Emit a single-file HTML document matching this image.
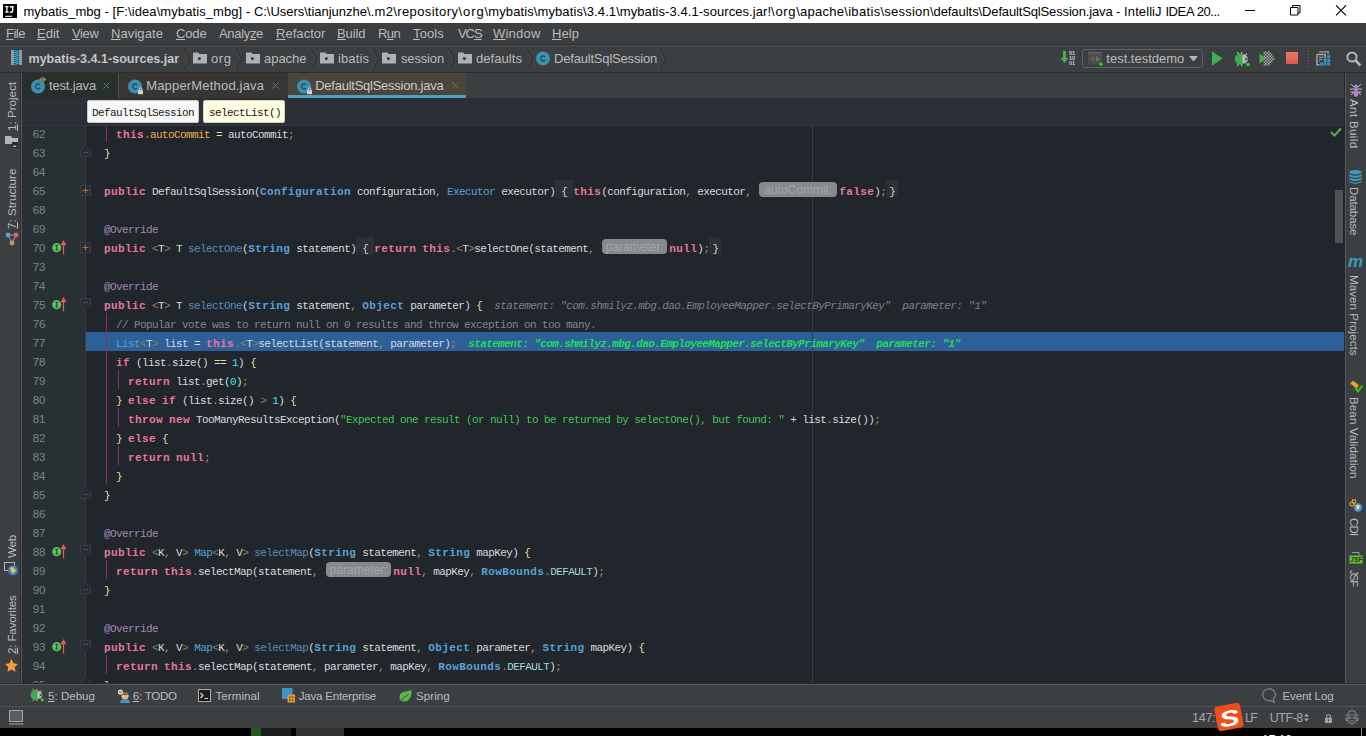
<!DOCTYPE html>
<html><head><meta charset="utf-8"><title>mybatis_mbg - IntelliJ IDEA</title>
<style>
*{box-sizing:border-box}
html,body{margin:0;padding:0}
body{width:1366px;height:736px;overflow:hidden;background:#3c3f41;position:relative;font-family:"Liberation Sans",sans-serif;font-size:12px;color:#bbbbbb}
.abs{position:absolute}
svg{position:absolute;overflow:visible}
.tx{position:absolute;white-space:pre;color:#bbbbbb}
.tx u{text-decoration:underline;text-underline-offset:0.6px;text-decoration-thickness:1px}
#title{left:0;top:0;width:1366px;height:23px;background:#ffffff}
#menu{left:0;top:23px;width:1366px;height:22px;background:#3c3f41;border-bottom:1px solid #2c2e30}
#nav{left:0;top:45px;width:1366px;height:28px;background:#3c3f41;border-top:1px solid #4b4e50;border-bottom:1px solid #2b2d2f}
#tabs{left:22px;top:73px;width:1322px;height:25px;background:#3c3f41}
#crumbs{left:22px;top:98px;width:1322px;height:28px;background:#2a3035;border-bottom:1px solid #343a40}
#editor{left:86px;top:126px;width:1258px;height:557px;background:#20262b}
#gutter{left:22px;top:126px;width:64px;height:557px;background:#293034;border-right:1px solid #373d42}
#lstrip{left:0;top:73px;width:22px;height:610px;background:#3c3f41;border-right:1px solid #555759;box-shadow:inset -1px 0 0 #2b2d2f}
#rstrip{left:1344px;top:73px;width:22px;height:610px;background:#3c3f41;border-left:1px solid #25292d;box-shadow:inset 1px 0 0 #555759}
#bbar{left:0;top:683px;width:1366px;height:23px;background:#3c3f41;border-top:1px solid #2b2d2f;box-shadow:inset 0 1px 0 #555759}
#status{left:0;top:706px;width:1366px;height:22px;background:#3c3f41;border-top:1px solid #4d5052}
#task{left:0;top:728px;width:1366px;height:8px;background:#000}
.row{position:absolute;height:19px;line-height:19px;white-space:pre;font-family:"Liberation Mono",monospace;font-size:11px;letter-spacing:-0.6px;color:#d6dade}
.ln{position:absolute;left:0;width:45.5px;text-align:right;height:19px;line-height:19px;font-family:"Liberation Sans",sans-serif;font-size:11.5px;color:#7c848a;white-space:pre}
.k{color:#e8769a;font-weight:bold;letter-spacing:0.4px}
.c{color:#5aa2d6;font-weight:bold;letter-spacing:0.4px}
.i{color:#5aa2d6}
.m{color:#5b8cba}
.f{color:#f0a94e}
.a{color:#a288b8}
.n{color:#35e4f4}
.s{color:#3fc653}
.cm{color:#80868c}
.b{color:#e8dca0}
.d{color:#a09a6c}
.o{color:#8c8658}
.sf{color:#a4d8d2}
.fb{color:#d0d4d8;background:#2a3036;padding:6.3px 0 0.3px}
.fb2{padding:6.3px 3px 0.3px}
.dbg{color:#7a8088;font-style:italic}
.dbgh{color:#22dd55;font-style:italic;font-weight:bold;letter-spacing:-0.6px}
.h{display:inline-block;vertical-align:top;margin:-1px 2px 0 2px;height:15px;line-height:17px;background:#878a8d;color:#a4a6a8;border-radius:4px;font-family:"Liberation Sans",sans-serif;font-size:12px;letter-spacing:0;text-align:center}
.vt{position:absolute;white-space:pre;font-size:12px;color:#bbbbbb;height:16px;line-height:16px;transform-origin:0 0}
</style></head><body>
<div id="title" class="abs"></div>
<svg style="left:3px;top:4px" width="14" height="14" viewBox="0 0 14 14"><rect width="14" height="14" fill="#000"/><path d="M2.200 2.700h3.400M3.900 2.700v5.400M2.200 8.100h3.400" stroke="#fff" stroke-width="1.300" fill="none"/><path d="M7 2.700h3.600M9.700 2.700v3.700q0 1.800-1.700 1.800H6.800" stroke="#fff" stroke-width="1.400" fill="none"/><path d="M2.100 12.300h6.800" stroke="#fff" stroke-width="1.100"/></svg><span class="tx" style="left:23.4px;top:3.5px;height:16px;line-height:16px;font-size:13px;letter-spacing:0.015px;color:#000;">mybatis_mbg </span><span class="tx" style="left:104.5px;top:3.5px;height:16px;line-height:16px;font-size:13px;letter-spacing:0.085px;color:#000;">- [F:\idea\mybatis_mbg] </span><span class="tx" style="left:246px;top:3.5px;height:16px;line-height:16px;font-size:13px;letter-spacing:-0.023px;color:#000;">- C:\Users\tianjunzhe</span><span class="tx" style="left:366.9px;top:3.5px;height:16px;line-height:16px;font-size:13px;letter-spacing:0.251px;color:#000;">\.m2</span><span class="tx" style="left:393.2px;top:3.5px;height:16px;line-height:16px;font-size:13px;letter-spacing:0.409px;color:#000;">\repository</span><span class="tx" style="left:458.4px;top:3.5px;height:16px;line-height:16px;font-size:13px;letter-spacing:0.948px;color:#000;">\org</span><span class="tx" style="left:484.6px;top:3.5px;height:16px;line-height:16px;font-size:13px;letter-spacing:0.099px;color:#000;">\mybatis</span><span class="tx" style="left:533.8px;top:3.5px;height:16px;line-height:16px;font-size:13px;letter-spacing:0.099px;color:#000;">\mybatis</span><span class="tx" style="left:583px;top:3.5px;height:16px;line-height:16px;font-size:13px;letter-spacing:0.111px;color:#000;">\3.4.1</span><span class="tx" style="left:616.2px;top:3.5px;height:16px;line-height:16px;font-size:13px;letter-spacing:0.064px;color:#000;">\mybatis-3.4.1-sources.jar!</span><span class="tx" style="left:771.1px;top:3.5px;height:16px;line-height:16px;font-size:13px;letter-spacing:0.673px;color:#000;">\org</span><span class="tx" style="left:796.2px;top:3.5px;height:16px;line-height:16px;font-size:13px;letter-spacing:0.248px;color:#000;">\apache</span><span class="tx" style="left:844.2px;top:3.5px;height:16px;line-height:16px;font-size:13px;letter-spacing:0.333px;color:#000;">\ibatis</span><span class="tx" style="left:880.5px;top:3.5px;height:16px;line-height:16px;font-size:13px;letter-spacing:0.212px;color:#000;">\session</span><span class="tx" style="left:929.9px;top:3.5px;height:16px;line-height:16px;font-size:13px;letter-spacing:-0.051px;color:#000;">\defaults</span><span class="tx" style="left:978.6px;top:3.5px;height:16px;line-height:16px;font-size:13px;letter-spacing:-0.147px;color:#000;">\DefaultSqlSession.java </span><span class="tx" style="left:1116px;top:3.5px;height:16px;line-height:16px;font-size:13px;letter-spacing:0.090px;color:#000;">- IntelliJ </span><span class="tx" style="left:1165.4px;top:3.5px;height:16px;line-height:16px;font-size:13px;letter-spacing:-0.390px;color:#000;">IDEA </span><span class="tx" style="left:1196.7px;top:3.5px;height:16px;line-height:16px;font-size:13px;letter-spacing:-0.439px;color:#000;">20...</span><svg style="left:1240px;top:0" width="126" height="23" viewBox="0 0 126 23"><path d="M5 10.500h10" stroke="#000" stroke-width="1" fill="none"/><path d="M50.500 7.500h7.500v7.500h-7.500zM52.500 7.500v-2h7.500v7.500h-2" stroke="#000" stroke-width="1" fill="none"/><path d="M96 5.300l10 10M106 5.300l-10 10" stroke="#000" stroke-width="1.100" fill="none"/></svg>
<div id="menu" class="abs"></div>
<span class="tx" style="left:6px;top:26.0px;height:16px;line-height:16px;font-size:13px;letter-spacing:-0.488px;"><u>F</u>ile</span><span class="tx" style="left:37px;top:26.0px;height:16px;line-height:16px;font-size:13px;letter-spacing:0.023px;"><u>E</u>dit</span><span class="tx" style="left:72px;top:26.0px;height:16px;line-height:16px;font-size:13px;letter-spacing:-0.363px;"><u>V</u>iew</span><span class="tx" style="left:111px;top:26.0px;height:16px;line-height:16px;font-size:13px;letter-spacing:0.086px;"><u>N</u>avigate</span><span class="tx" style="left:176px;top:26.0px;height:16px;line-height:16px;font-size:13px;letter-spacing:-0.145px;"><u>C</u>ode</span><span class="tx" style="left:219px;top:26.0px;height:16px;line-height:16px;font-size:13px;letter-spacing:-0.321px;">Analy<u>z</u>e</span><span class="tx" style="left:276px;top:26.0px;height:16px;line-height:16px;font-size:13px;letter-spacing:0.045px;"><u>R</u>efactor</span><span class="tx" style="left:337px;top:26.0px;height:16px;line-height:16px;font-size:13px;letter-spacing:-0.084px;"><u>B</u>uild</span><span class="tx" style="left:378px;top:26.0px;height:16px;line-height:16px;font-size:13px;letter-spacing:-0.620px;">R<u>u</u>n</span><span class="tx" style="left:413px;top:26.0px;height:16px;line-height:16px;font-size:13px;letter-spacing:0.128px;"><u>T</u>ools</span><span class="tx" style="left:458px;top:26.0px;height:16px;line-height:16px;font-size:13px;letter-spacing:-1.078px;">VC<u>S</u></span><span class="tx" style="left:493px;top:26.0px;height:16px;line-height:16px;font-size:13px;letter-spacing:0.208px;"><u>W</u>indow</span><span class="tx" style="left:552px;top:26.0px;height:16px;line-height:16px;font-size:13px;letter-spacing:0.062px;"><u>H</u>elp</span>
<div id="nav" class="abs"></div>
<svg style="left:11px;top:50px" width="11" height="15" viewBox="0 0 11 15"><rect x="0" y="0" width="11" height="15" fill="#8d98a1"/><rect x="3" y="0" width="5" height="15" fill="#2f3a42"/><path d="M3.300 0.500l4.400 1-4.400 1 4.400 1-4.400 1 4.400 1-4.400 1 4.400 1-4.400 1 4.400 1-4.400 1 4.400 1-4.400 1 4.400 1-4.400 1" stroke="#2cb4e6" stroke-width="0.900" fill="none"/></svg><span class="tx" style="left:28.5px;top:51.0px;height:16px;line-height:16px;font-size:12.5px;letter-spacing:0.025px;font-weight:bold;color:#c4c6c8;">mybatis-3.4.1-sources.jar</span><svg style="left:181.6px;top:47.500px" width="8" height="22" viewBox="0 0 8 22"><path d="M0.500 0.200l6 10.800-6 10.800" stroke="#505355" stroke-width="1" fill="none"/><path d="M1.500 0.200l6 10.800-6 10.800" stroke="#2b2d2f" stroke-width="1.100" fill="none"/></svg><svg style="left:193px;top:52px" width="14" height="12" viewBox="0 0 14 12"><path d="M0 0.5h5.2l1.3 1.6H14V11.5H0z" fill="#aab2ba"/><circle cx="6.4" cy="6.6" r="1.6" fill="#3c3f41"/></svg><span class="tx" style="left:211px;top:51.0px;height:16px;line-height:16px;font-size:13px;letter-spacing:0.568px;">org</span><svg style="left:246px;top:52px" width="14" height="12" viewBox="0 0 14 12"><path d="M0 0.5h5.2l1.3 1.6H14V11.5H0z" fill="#aab2ba"/><circle cx="6.4" cy="6.6" r="1.6" fill="#3c3f41"/></svg><span class="tx" style="left:264px;top:51.0px;height:16px;line-height:16px;font-size:13px;letter-spacing:-0.026px;">apache</span><svg style="left:320px;top:52px" width="14" height="12" viewBox="0 0 14 12"><path d="M0 0.5h5.2l1.3 1.6H14V11.5H0z" fill="#aab2ba"/><circle cx="6.4" cy="6.6" r="1.6" fill="#3c3f41"/></svg><span class="tx" style="left:338px;top:51.0px;height:16px;line-height:16px;font-size:13px;letter-spacing:0.107px;">ibatis</span><svg style="left:382px;top:52px" width="14" height="12" viewBox="0 0 14 12"><path d="M0 0.5h5.2l1.3 1.6H14V11.5H0z" fill="#aab2ba"/><circle cx="6.4" cy="6.6" r="1.6" fill="#3c3f41"/></svg><span class="tx" style="left:401px;top:51.0px;height:16px;line-height:16px;font-size:13px;letter-spacing:-0.154px;">session</span><svg style="left:458px;top:52px" width="14" height="12" viewBox="0 0 14 12"><path d="M0 0.5h5.2l1.3 1.6H14V11.5H0z" fill="#aab2ba"/><circle cx="6.4" cy="6.6" r="1.6" fill="#3c3f41"/></svg><span class="tx" style="left:476px;top:51.0px;height:16px;line-height:16px;font-size:13px;letter-spacing:0.057px;">defaults</span><svg style="left:234px;top:47.500px" width="8" height="22" viewBox="0 0 8 22"><path d="M0.500 0.200l6 10.800-6 10.800" stroke="#505355" stroke-width="1" fill="none"/><path d="M1.500 0.200l6 10.800-6 10.800" stroke="#2b2d2f" stroke-width="1.100" fill="none"/></svg><svg style="left:308.5px;top:47.500px" width="8" height="22" viewBox="0 0 8 22"><path d="M0.500 0.200l6 10.800-6 10.800" stroke="#505355" stroke-width="1" fill="none"/><path d="M1.500 0.200l6 10.800-6 10.800" stroke="#2b2d2f" stroke-width="1.100" fill="none"/></svg><svg style="left:371.2px;top:47.500px" width="8" height="22" viewBox="0 0 8 22"><path d="M0.500 0.200l6 10.800-6 10.800" stroke="#505355" stroke-width="1" fill="none"/><path d="M1.500 0.200l6 10.800-6 10.800" stroke="#2b2d2f" stroke-width="1.100" fill="none"/></svg><svg style="left:446.6px;top:47.500px" width="8" height="22" viewBox="0 0 8 22"><path d="M0.500 0.200l6 10.800-6 10.800" stroke="#505355" stroke-width="1" fill="none"/><path d="M1.500 0.200l6 10.800-6 10.800" stroke="#2b2d2f" stroke-width="1.100" fill="none"/></svg><svg style="left:524.6px;top:47.500px" width="8" height="22" viewBox="0 0 8 22"><path d="M0.500 0.200l6 10.800-6 10.800" stroke="#505355" stroke-width="1" fill="none"/><path d="M1.500 0.200l6 10.800-6 10.800" stroke="#2b2d2f" stroke-width="1.100" fill="none"/></svg><svg style="left:536px;top:51px" width="16" height="16" viewBox="0 0 16 16"><circle cx="7" cy="7.500" r="7" fill="#3b8fb0"/><path d="M9.100 6a2.500 2.500 0 1 0 0 3" stroke="#234e62" stroke-width="1.300" fill="none"/></svg><span class="tx" style="left:554px;top:51.0px;height:16px;line-height:16px;font-size:13px;letter-spacing:-0.190px;">DefaultSqlSession</span><svg style="left:658.2px;top:47.500px" width="8" height="22" viewBox="0 0 8 22"><path d="M0.500 0.200l6 10.800-6 10.800" stroke="#505355" stroke-width="1" fill="none"/><path d="M1.500 0.200l6 10.800-6 10.800" stroke="#2b2d2f" stroke-width="1.100" fill="none"/></svg><svg style="left:1060px;top:50px" width="17" height="16" viewBox="0 0 17 16"><path d="M3 1h3v7h2.5L4.5 13 0.5 8H3z" fill="#4faa4f"/><g fill="#c8cacc" font-family="Liberation Sans,sans-serif" font-size="5.5" font-weight="bold"><text x="9" y="5">01</text><text x="9" y="10">10</text><text x="9" y="15">01</text></g></svg><div class="abs" style="left:1082px;top:49px;width:121px;height:19px;border:1px solid #5e6163;border-radius:3px;background:#3c3f41"></div><svg style="left:1088px;top:52px" width="16" height="15" viewBox="0 0 16 15"><rect x="0" y="0" width="14" height="12.500" fill="#4b4e50"/><rect x="0" y="0" width="14" height="1.600" fill="#5c5f61"/><path d="M6 3.800v6.400L2 7z" fill="#84504a"/><path d="M8 3.800v6.400L12 7z" fill="#4a8456"/><circle cx="13" cy="12.200" r="2.100" fill="#1fe01f" stroke="#2c2e30" stroke-width="0.500"/></svg><span class="tx" style="left:1106.3px;top:51.0px;height:16px;line-height:16px;font-size:13px;letter-spacing:-0.004px;">test.testdemo</span><svg style="left:1189px;top:55.700px" width="9" height="5.400" viewBox="0 0 9 5.400"><path d="M0 0h9L4.500 5.400z" fill="#b4b6b8"/></svg><svg style="left:1212px;top:50.500px" width="11" height="15" viewBox="0 0 11 15"><path d="M0 0.300L10.600 7.500 0 14.700z" fill="#45ad4d"/></svg><svg style="left:1234px;top:51px" width="18" height="16" viewBox="0 0 18 16"><path d="M3 1l2.500 3M8 1l-1 3M3 15l2.500-3M8 15l-1-3M13 2.500l-2.500 2.500M13 13l-2.500-2.500" stroke="#b8babc" stroke-width="1.100" fill="none"/><ellipse cx="6.300" cy="8" rx="5.600" ry="5.600" fill="#3fae4a"/><path d="M9 3.200q5 1 5 4.800t-5 4.800q-2-4.800 0-9.600z" fill="#b4b6b8"/><path d="M11.500 6.500l2.800 1.500-2.800 1.500z" fill="#3c3f41"/><circle cx="14" cy="13.600" r="2.200" fill="#1fe01f" stroke="#2c2e30" stroke-width="0.600"/></svg><svg style="left:1259px;top:51px" width="17" height="15" viewBox="0 0 17 15"><defs><pattern id="ck" width="3" height="3" patternUnits="userSpaceOnUse"><rect width="1.5" height="1.5" fill="#b0b2b4"/><rect x="1.5" y="1.5" width="1.5" height="1.5" fill="#b0b2b4"/></pattern></defs><path d="M4.500 0.300h6l5.500 7.200-5.500 7.200h-6z" fill="url(#ck)"/><path d="M0.5 2.5L7 7.5 0.5 12.5z" fill="#4cb04c"/></svg><div class="abs" style="left:1286px;top:52px;width:12px;height:12px;background:linear-gradient(#e8786a,#dc5c4c)"></div><div class="abs" style="left:1308px;top:48px;width:1px;height:20px;background:repeating-linear-gradient(#6a6d6f 0 1px,transparent 1px 3px)"></div><svg style="left:1316px;top:51px" width="15" height="15" viewBox="0 0 15 15"><path d="M3 0.800h9.200v2.800" fill="none" stroke="#9a9da0" stroke-width="1.300"/><g fill="#3592c4"><rect x="11.200" y="4.300" width="3" height="3"/><rect x="7.600" y="7.900" width="3" height="3"/><rect x="11.200" y="7.900" width="3" height="3"/><rect x="4" y="11.500" width="3" height="3"/><rect x="7.600" y="11.500" width="3" height="3"/><rect x="11.200" y="11.500" width="3" height="3"/></g><path d="M0.900 3.400h8.300v4M0.900 3.400v10.300h2.600" fill="none" stroke="#a4a7aa" stroke-width="1.500"/><path d="M3 6.200h4.500M3 8.400h3M3 10.500h1" stroke="#a4a7aa" stroke-width="1"/></svg><svg style="left:1346px;top:51px" width="16" height="16" viewBox="0 0 16 16"><circle cx="6" cy="6" r="4.6" fill="none" stroke="#b0b2b4" stroke-width="2"/><path d="M9.5 9.5L14.5 14.5" stroke="#b0b2b4" stroke-width="2.6"/></svg>
<div id="lstrip" class="abs"></div>
<div id="rstrip" class="abs"></div>
<span class="vt" style="left:3.8px;top:130.6px;transform:rotate(-90deg);font-size:11.6px;letter-spacing:0.002px"><u>1</u>: Project</span><svg style="left:5px;top:136px" width="13" height="12" viewBox="0 0 13 12"><path d="M0 0h6l1.2 2H13v6H0z" fill="#aeb4ba"/><rect x="7" y="6" width="6" height="6" fill="#2b2b2b"/><rect x="8.2" y="9.6" width="3.2" height="1.2" fill="#ddd"/></svg><span class="vt" style="left:3.8px;top:228.5px;transform:rotate(-90deg);font-size:11.6px;letter-spacing:0.047px"><u>7</u>: Structure</span><svg style="left:5px;top:232px" width="14" height="14" viewBox="0 0 14 14"><path d="M3 3l4 8M11 3l-4 8M3 3h8" stroke="#9a9da0" stroke-width="1" fill="none"/><circle cx="3" cy="3" r="2.4" fill="#5aa0d8"/><circle cx="11" cy="3" r="2.4" fill="#e06060"/><circle cx="7" cy="11" r="2.4" fill="#d89050"/></svg><span class="vt" style="left:3.8px;top:558.0px;transform:rotate(-90deg);font-size:11.6px;letter-spacing:-0.214px">Web</span><svg style="left:4px;top:562px" width="15" height="14" viewBox="0 0 15 14"><rect x="0.5" y="0.5" width="10" height="8" fill="none" stroke="#aeb4ba"/><circle cx="9" cy="8.5" r="5" fill="#3a7fd0"/><path d="M6 6q2-2 4 0t2 3q-2 1-3 3-2-2-3-6z" fill="#e8c848"/></svg><span class="vt" style="left:3.8px;top:654.4px;transform:rotate(-90deg);font-size:11.6px;letter-spacing:-0.157px"><u>2</u>: Favorites</span><svg style="left:5px;top:659px" width="13" height="13" viewBox="0 0 13 13"><path d="M6.5 0l2 4.3 4.5.6-3.3 3.2.8 4.7-4-2.3-4 2.3.8-4.7L0 4.900l4.500-.6z" fill="#f0a035"/></svg>
<svg style="left:1350px;top:83px" width="12" height="14" viewBox="0 0 12 14"><path d="M1 1l3 3M11 1l-3 3M0 6h12M1 12l3-3M11 12l-3-3M0.500 9h11" stroke="#c8cacc" stroke-width="0.9" fill="none"/><ellipse cx="6" cy="3.500" rx="2" ry="2" fill="#b77fd8"/><ellipse cx="6" cy="7" rx="1.800" ry="1.800" fill="#b77fd8"/><ellipse cx="6" cy="11" rx="2.400" ry="2.800" fill="#b77fd8"/></svg><span class="vt" style="left:1361.7px;top:99.3px;transform:rotate(90deg);font-size:11.6px;letter-spacing:0.344px">Ant Build</span><svg style="left:1349px;top:170px" width="13" height="14" viewBox="0 0 13 14"><g fill="#3d9ac8"><ellipse cx="6.500" cy="2.200" rx="6.300" ry="2.200"/><path d="M0.200 4.200q6.300 3 12.600 0v2q-6.300 3-12.600 0z"/><path d="M0.200 7.600q6.300 3 12.600 0v2q-6.300 3-12.600 0z"/><path d="M0.200 11q6.300 3 12.600 0v1q-6.300 3.500-12.600 0z"/></g></svg><span class="vt" style="left:1361.7px;top:187.4px;transform:rotate(90deg);font-size:11.6px;letter-spacing:-0.155px">Database</span><div class="abs" style="left:1348px;top:252px;width:16px;height:20px;line-height:20px;font:italic bold 17px 'Liberation Sans',sans-serif;color:#3d9ac8">m</div><span class="vt" style="left:1361.7px;top:274.8px;transform:rotate(90deg);font-size:11.6px;letter-spacing:0.057px">Maven Projects</span><svg style="left:1349px;top:380px" width="14" height="13" viewBox="0 0 14 13"><path d="M1 3.500L4 0.500l6 4.500-2 4z" fill="#e8a030" stroke="#8a5a10" stroke-width="0.800"/><path d="M6.500 8.500l2.500 3 4.500-6" stroke="#22cc22" stroke-width="2" fill="none"/></svg><span class="vt" style="left:1361.7px;top:397.0px;transform:rotate(90deg);font-size:11.6px;letter-spacing:0.083px">Bean Validation</span><svg style="left:1349px;top:499px" width="14" height="14" viewBox="0 0 14 14"><circle cx="3" cy="5" r="2" fill="none" stroke="#e8a030" stroke-width="1.200"/><circle cx="5" cy="2.500" r="1.800" fill="none" stroke="#e8a030" stroke-width="1.200"/><circle cx="9" cy="8.500" r="4.200" fill="#4a90d8"/><path d="M7 6.500q2-1.500 4 0.500-0.500 3-3 4z" fill="#f0e060"/></svg><span class="vt" style="left:1361.7px;top:517.5px;transform:rotate(90deg);font-size:11.6px;letter-spacing:-0.856px">CDI</span><svg style="left:1349px;top:552px" width="14" height="14" viewBox="0 0 14 14"><path d="M3 0.500h7v3" stroke="#9a9da0" fill="none"/><rect x="0.500" y="3.500" width="13" height="8" fill="#62c040"/><text x="1.300" y="10.300" font-family="Liberation Sans,sans-serif" font-size="6.500" font-weight="bold" fill="#1a3a10">JSF</text></svg><span class="vt" style="left:1361.7px;top:569.8px;transform:rotate(90deg);font-size:10.5px;letter-spacing:-0.891px">JSF</span>
<div id="tabs" class="abs"></div>
<div class="abs" style="left:22px;top:73px;width:96px;height:25px;background:#262f2a"></div><div class="abs" style="left:118px;top:73px;width:170px;height:25px;background:#383634;border-left:1px solid #4c4b49"></div><div class="abs" style="left:288px;top:73px;width:178px;height:25px;background:#4a4539;border-bottom:3px solid #4a9fc8"></div><svg style="left:31px;top:78.5px" width="16" height="16" viewBox="0 0 16 16"><circle cx="7" cy="7.500" r="7" fill="#3b8fb0"/><path d="M9.100 6a2.500 2.500 0 1 0 0 3" stroke="#234e62" stroke-width="1.300" fill="none"/></svg><svg style="left:39px;top:76px" width="8" height="8" viewBox="0 0 8 8"><path d="M0 3.500L3 1v5z" fill="#e05a3a"/><path d="M3.500 0.500L7.500 3.500 3.500 6.500z" fill="#4cb04c"/></svg><span class="tx" style="left:49px;top:78.3px;height:16px;line-height:16px;font-size:13px;letter-spacing:-0.158px;">test.java</span><svg style="left:102.5px;top:82px" width="7" height="7" viewBox="0 0 8 8"><path d="M0.500 0.500l7 7M7.500 0.500l-7 7" stroke="#6e7174" stroke-width="1.100" fill="none"/></svg><svg style="left:128px;top:78.5px" width="16" height="16" viewBox="0 0 16 16"><circle cx="7" cy="7.500" r="7" fill="#3b8fb0"/><path d="M9.100 6a2.500 2.500 0 1 0 0 3" stroke="#234e62" stroke-width="1.300" fill="none"/><rect x="10" y="11.200" width="5" height="4" fill="#d0d2d4"/><path d="M11.200 11.200V10a1.300 1.300 0 0 1 2.600 0v1.200" stroke="#d0d2d4" stroke-width="1" fill="none"/></svg><span class="tx" style="left:146.2px;top:78.3px;height:16px;line-height:16px;font-size:13px;letter-spacing:0.182px;">MapperMethod.java</span><svg style="left:272px;top:82px" width="7" height="7" viewBox="0 0 8 8"><path d="M0.500 0.500l7 7M7.500 0.500l-7 7" stroke="#6e7174" stroke-width="1.100" fill="none"/></svg><svg style="left:297px;top:78.5px" width="16" height="16" viewBox="0 0 16 16"><circle cx="7" cy="7.500" r="7" fill="#3b8fb0"/><path d="M9.100 6a2.500 2.500 0 1 0 0 3" stroke="#234e62" stroke-width="1.300" fill="none"/><rect x="10" y="11.200" width="5" height="4" fill="#d0d2d4"/><path d="M11.200 11.200V10a1.300 1.300 0 0 1 2.600 0v1.200" stroke="#d0d2d4" stroke-width="1" fill="none"/></svg><span class="tx" style="left:315.2px;top:78.3px;height:16px;line-height:16px;font-size:13px;letter-spacing:-0.250px;color:#c8cacc;">DefaultSqlSession.java</span><svg style="left:451.5px;top:82px" width="7" height="7" viewBox="0 0 8 8"><path d="M0.500 0.500l7 7M7.500 0.500l-7 7" stroke="#6e7174" stroke-width="1.100" fill="none"/></svg>
<div id="crumbs" class="abs"></div>
<div class="abs" style="left:87px;top:100px;width:112px;height:22.6px;background:#f7f7f7;border:1px solid #c9c9c9;border-radius:2px"></div><div class="abs" style="left:203px;top:100px;width:82px;height:22.6px;background:#fffde3;border:1px solid #d8d6b8;border-radius:2px"></div><div class="row" style="left:92px;top:103.500px;color:#1a1a1a">DefaultSqlSession</div><div class="row" style="left:209px;top:103.500px;color:#1a1a1a">selectList()</div>
<div id="editor" class="abs"></div><div id="gutter" class="abs"></div>
<div class="abs" style="left:86px;top:332px;width:1258px;height:19px;background:#2d5f98"></div>
<div class="abs" style="left:812px;top:126px;width:1px;height:557px;background:#343a40"></div>
<div class="abs" style="left:106px;top:126px;width:1px;height:16px;background:#8e3055"></div><div class="abs" style="left:106px;top:313px;width:1px;height:171px;background:#8e3055"></div><div class="abs" style="left:118px;top:370px;width:1px;height:19px;background:#8e3055"></div><div class="abs" style="left:118px;top:408px;width:1px;height:19px;background:#8e3055"></div><div class="abs" style="left:118px;top:446px;width:1px;height:19px;background:#8e3055"></div><div class="abs" style="left:106px;top:560px;width:1px;height:19px;background:#8e3055"></div><div class="abs" style="left:106px;top:655px;width:1px;height:19px;background:#8e3055"></div>
<svg style="left:52px;top:240px" width="14" height="15" viewBox="0 0 14 15"><circle cx="4.700" cy="7.700" r="4.600" fill="#5dbb63"/><path d="M3.400 5.400h2.600M4.700 5.400v4.600M3.400 10h2.600" stroke="#1f3a22" stroke-width="0.900" fill="none"/><path d="M11.500 14.500V2M9.600 4.600l1.900-3.400 1.900 3.400z" stroke="#e0604a" stroke-width="1.200" fill="#e0604a"/></svg><svg style="left:52px;top:297px" width="14" height="15" viewBox="0 0 14 15"><circle cx="4.700" cy="7.700" r="4.600" fill="#5dbb63"/><path d="M3.400 5.400h2.600M4.700 5.400v4.600M3.400 10h2.600" stroke="#1f3a22" stroke-width="0.900" fill="none"/><path d="M11.500 14.500V2M9.600 4.600l1.900-3.400 1.900 3.400z" stroke="#e0604a" stroke-width="1.200" fill="#e0604a"/></svg><svg style="left:52px;top:544px" width="14" height="15" viewBox="0 0 14 15"><circle cx="4.700" cy="7.700" r="4.600" fill="#5dbb63"/><path d="M3.400 5.400h2.600M4.700 5.400v4.600M3.400 10h2.600" stroke="#1f3a22" stroke-width="0.900" fill="none"/><path d="M11.500 14.500V2M9.600 4.600l1.900-3.400 1.900 3.400z" stroke="#e0604a" stroke-width="1.200" fill="#e0604a"/></svg><svg style="left:52px;top:639px" width="14" height="15" viewBox="0 0 14 15"><circle cx="4.700" cy="7.700" r="4.600" fill="#5dbb63"/><path d="M3.400 5.400h2.600M4.700 5.400v4.600M3.400 10h2.600" stroke="#1f3a22" stroke-width="0.900" fill="none"/><path d="M11.500 14.500V2M9.600 4.600l1.900-3.400 1.900 3.400z" stroke="#e0604a" stroke-width="1.200" fill="#e0604a"/></svg><svg style="left:80px;top:145px" width="11" height="12" viewBox="0 0 11 12"><path d="M0.500 11.500h10V5L5.500 0.500 0.500 5z" fill="#262c31" stroke="#363d43"/><path d="M3 7.500h5" stroke="#464e55" stroke-width="1"/></svg><svg style="left:80px;top:185px" width="11" height="11" viewBox="0 0 11 11"><rect x="0.500" y="0.500" width="10" height="10" fill="#262c31" stroke="#363d43"/><path d="M2.500 5.500h6M5.500 2.500v6" stroke="#b56c1c" stroke-width="1.100"/></svg><svg style="left:80px;top:242px" width="11" height="11" viewBox="0 0 11 11"><rect x="0.500" y="0.500" width="10" height="10" fill="#262c31" stroke="#363d43"/><path d="M2.500 5.500h6M5.500 2.500v6" stroke="#b56c1c" stroke-width="1.100"/></svg><svg style="left:80px;top:298px" width="11" height="12" viewBox="0 0 11 12"><path d="M0.500 0.500h10v6.500l-5 4.500-5-4.500z" fill="#262c31" stroke="#363d43"/><path d="M3 4.500h5" stroke="#464e55" stroke-width="1"/></svg><svg style="left:80px;top:487px" width="11" height="12" viewBox="0 0 11 12"><path d="M0.500 11.500h10V5L5.500 0.500 0.500 5z" fill="#262c31" stroke="#363d43"/><path d="M3 7.500h5" stroke="#464e55" stroke-width="1"/></svg><svg style="left:80px;top:545px" width="11" height="12" viewBox="0 0 11 12"><path d="M0.500 0.500h10v6.500l-5 4.500-5-4.500z" fill="#262c31" stroke="#363d43"/><path d="M3 4.500h5" stroke="#464e55" stroke-width="1"/></svg><svg style="left:80px;top:582px" width="11" height="12" viewBox="0 0 11 12"><path d="M0.500 11.500h10V5L5.500 0.500 0.500 5z" fill="#262c31" stroke="#363d43"/><path d="M3 7.500h5" stroke="#464e55" stroke-width="1"/></svg><svg style="left:80px;top:640px" width="11" height="12" viewBox="0 0 11 12"><path d="M0.500 0.500h10v6.500l-5 4.500-5-4.500z" fill="#262c31" stroke="#363d43"/><path d="M3 4.500h5" stroke="#464e55" stroke-width="1"/></svg><svg style="left:80px;top:677px" width="11" height="12" viewBox="0 0 11 12"><path d="M0.500 11.500h10V5L5.500 0.500 0.500 5z" fill="#262c31" stroke="#363d43"/><path d="M3 7.500h5" stroke="#464e55" stroke-width="1"/></svg>
<div class="ln" style="top:125px">62</div><div class="row" style="top:126px;left:116px"><span class="k">this</span><span class="d">.</span><span class="f">autoCommit</span> <span class="b">=</span> autoCommit<span class="d">;</span></div>
<div class="ln" style="top:144px">63</div><div class="row" style="top:145px;left:104px"><span class="b">}</span></div>
<div class="ln" style="top:163px">64</div>
<div class="ln" style="top:182px">65</div><div class="row" style="top:183px;left:104px"><span class="k">public</span> DefaultSqlSession(<span class="c">Configuration</span> configuration<span class="d">,</span> <span class="i">Executor</span> executor)<span class="fb"> { </span><span class="k">this</span>(configuration<span class="d">,</span> executor<span class="d">,</span> <span class="h" style="width:78px">autoCommit:</span><span class="k">false</span>)<span class="d">;</span><span class="fb fb2">}</span></div>
<div class="ln" style="top:201px">68</div>
<div class="ln" style="top:220px">69</div><div class="row" style="top:221px;left:104px"><span class="a">@Override</span></div>
<div class="ln" style="top:239px">70</div><div class="row" style="top:240px;left:104px"><span class="k">public</span> <span class="o">&lt;</span>T<span class="o">&gt;</span> T <span class="m">selectOne</span>(<span class="c">String</span> statement)<span class="fb"> { </span><span class="k">return</span> <span class="k">this</span><span class="d">.</span><span class="o">&lt;</span>T<span class="o">&gt;</span>selectOne(statement<span class="d">,</span> <span class="h" style="width:65px">parameter:</span><span class="k">null</span>)<span class="d">;</span><span class="fb fb2">}</span></div>
<div class="ln" style="top:258px">73</div>
<div class="ln" style="top:277px">74</div><div class="row" style="top:278px;left:104px"><span class="a">@Override</span></div>
<div class="ln" style="top:296px">75</div><div class="row" style="top:297px;left:104px"><span class="k">public</span> <span class="o">&lt;</span>T<span class="o">&gt;</span> T <span class="m">selectOne</span>(<span class="c">String</span> statement<span class="d">,</span> <span class="c">Object</span> parameter) <span class="b">{</span>  <span class="dbg">statement: &quot;com.shmilyz.mbg.dao.EmployeeMapper.selectByPrimaryKey&quot;  parameter: &quot;1&quot;</span></div>
<div class="ln" style="top:315px">76</div><div class="row" style="top:316px;left:116px"><span class="cm">// Popular vote was to return null on 0 results and throw exception on too many.</span></div>
<div class="ln" style="top:334px">77</div><div class="row" style="top:335px;left:116px"><span class="i">List</span><span class="o">&lt;</span>T<span class="o">&gt;</span> list <span class="b">=</span> <span class="k">this</span><span class="d">.</span><span class="o">&lt;</span>T<span class="o">&gt;</span>selectList(statement<span class="d">,</span> parameter)<span class="d">;</span>  <span class="dbgh">statement: &quot;com.shmilyz.mbg.dao.EmployeeMapper.selectByPrimaryKey&quot;  parameter: &quot;1&quot;</span></div>
<div class="ln" style="top:353px">78</div><div class="row" style="top:354px;left:116px"><span class="k">if</span> (list<span class="d">.</span>size() <span class="b">==</span> <span class="n">1</span>) <span class="b">{</span></div>
<div class="ln" style="top:372px">79</div><div class="row" style="top:373px;left:128px"><span class="k">return</span> list<span class="d">.</span>get(<span class="n">0</span>)<span class="d">;</span></div>
<div class="ln" style="top:391px">80</div><div class="row" style="top:392px;left:116px"><span class="b">}</span> <span class="k">else</span> <span class="k">if</span> (list<span class="d">.</span>size() <span class="o">&gt;</span> <span class="n">1</span>) <span class="b">{</span></div>
<div class="ln" style="top:410px">81</div><div class="row" style="top:411px;left:128px"><span class="k">throw</span> <span class="k">new</span> TooManyResultsException(<span class="s">&quot;Expected one result (or null) to be returned by selectOne(), but found: &quot;</span> + list<span class="d">.</span>size())<span class="d">;</span></div>
<div class="ln" style="top:429px">82</div><div class="row" style="top:430px;left:116px"><span class="b">}</span> <span class="k">else</span> <span class="b">{</span></div>
<div class="ln" style="top:448px">83</div><div class="row" style="top:449px;left:128px"><span class="k">return</span> <span class="k">null</span><span class="d">;</span></div>
<div class="ln" style="top:467px">84</div><div class="row" style="top:468px;left:116px"><span class="b">}</span></div>
<div class="ln" style="top:486px">85</div><div class="row" style="top:487px;left:104px"><span class="b">}</span></div>
<div class="ln" style="top:505px">86</div>
<div class="ln" style="top:524px">87</div><div class="row" style="top:525px;left:104px"><span class="a">@Override</span></div>
<div class="ln" style="top:543px">88</div><div class="row" style="top:544px;left:104px"><span class="k">public</span> <span class="o">&lt;</span>K<span class="d">,</span> V<span class="o">&gt;</span> <span class="i">Map</span><span class="o">&lt;</span>K<span class="d">,</span> V<span class="o">&gt;</span> <span class="m">selectMap</span>(<span class="c">String</span> statement<span class="d">,</span> <span class="c">String</span> mapKey) <span class="b">{</span></div>
<div class="ln" style="top:562px">89</div><div class="row" style="top:563px;left:116px"><span class="k">return</span> <span class="k">this</span><span class="d">.</span>selectMap(statement<span class="d">,</span> <span class="h" style="width:65px">parameter:</span><span class="k">null</span><span class="d">,</span> mapKey<span class="d">,</span> <span class="c">RowBounds</span><span class="d">.</span><span class="sf">DEFAULT</span>)<span class="d">;</span></div>
<div class="ln" style="top:581px">90</div><div class="row" style="top:582px;left:104px"><span class="b">}</span></div>
<div class="ln" style="top:600px">91</div>
<div class="ln" style="top:619px">92</div><div class="row" style="top:620px;left:104px"><span class="a">@Override</span></div>
<div class="ln" style="top:638px">93</div><div class="row" style="top:639px;left:104px"><span class="k">public</span> <span class="o">&lt;</span>K<span class="d">,</span> V<span class="o">&gt;</span> <span class="i">Map</span><span class="o">&lt;</span>K<span class="d">,</span> V<span class="o">&gt;</span> <span class="m">selectMap</span>(<span class="c">String</span> statement<span class="d">,</span> <span class="c">Object</span> parameter<span class="d">,</span> <span class="c">String</span> mapKey) <span class="b">{</span></div>
<div class="ln" style="top:657px">94</div><div class="row" style="top:658px;left:116px"><span class="k">return</span> <span class="k">this</span><span class="d">.</span>selectMap(statement<span class="d">,</span> parameter<span class="d">,</span> mapKey<span class="d">,</span> <span class="c">RowBounds</span><span class="d">.</span><span class="sf">DEFAULT</span>)<span class="d">;</span></div>
<div class="ln" style="top:676px">95</div><div class="row" style="top:677px;left:104px"><span class="b">}</span></div>
<div class="abs" style="left:1335px;top:190px;width:8px;height:53px;background:#4d5255"></div><svg style="left:1330px;top:127px" width="12" height="10" viewBox="0 0 12 10"><path d="M1 5l3.500 3.500L11 1.500" stroke="#5aa84a" stroke-width="2.200" fill="none"/></svg>
<div id="bbar" class="abs"></div>
<svg style="left:30px;top:688px" width="15.800" height="14" viewBox="0 0 18 16"><path d="M3 1l2.500 3M8 1l-1 3M3 15l2.500-3M8 15l-1-3M13 2.500l-2.500 2.500M13 13l-2.500-2.500" stroke="#b8babc" stroke-width="1.100" fill="none"/><ellipse cx="6.300" cy="8" rx="5.600" ry="5.600" fill="#3fae4a"/><path d="M9 3.200q5 1 5 4.800t-5 4.800q-2-4.800 0-9.600z" fill="#b4b6b8"/><path d="M11.500 6.500l2.800 1.500-2.800 1.500z" fill="#3c3f41"/><circle cx="14" cy="13.600" r="2.200" fill="#1fe01f" stroke="#2c2e30" stroke-width="0.600"/></svg><span class="tx" style="left:48px;top:688.0px;height:16px;line-height:16px;font-size:11.6px;letter-spacing:-0.008px;"><u>5</u>: Debug</span><svg style="left:117px;top:689px" width="13" height="14" viewBox="0 0 13 14"><circle cx="3.500" cy="3" r="2.600" fill="#d8dadc"/><path d="M2 3h3" stroke="#444" stroke-width="0.800"/><circle cx="8" cy="7" r="3.600" fill="#e8b878"/><path d="M4.500 6q3.500-4 7 0z" fill="#7a5a3a"/><path d="M3 14q0-4 5-4t5 4z" fill="#4a90d0"/></svg><span class="tx" style="left:132.8px;top:688.0px;height:16px;line-height:16px;font-size:11.6px;letter-spacing:-0.281px;"><u>6</u>: TODO</span><svg style="left:198px;top:689px" width="13" height="13" viewBox="0 0 13 13"><rect x="0.500" y="0.500" width="12" height="12" fill="#1e1e1e" stroke="#a8aaac"/><path d="M2.500 4l2.500 2.500L2.500 9M6.500 9.500h3.500" stroke="#e0e0e0" stroke-width="1.100" fill="none"/></svg><span class="tx" style="left:215.4px;top:688.0px;height:16px;line-height:16px;font-size:11.6px;letter-spacing:0.061px;">Terminal</span><svg style="left:282px;top:688px" width="13" height="15" viewBox="0 0 13 15"><rect x="0" y="0" width="10.500" height="11" fill="#3d94c8"/><rect x="5.500" y="6.500" width="7.500" height="8" fill="#e0a030"/><path d="M7 8.500h1.500v1.500H7zM9.800 8.500h1.500v1.500H9.800zM7 11.300h1.500v1.500H7zM9.800 11.300h1.500v1.500H9.800z" fill="#5a3a08"/></svg><span class="tx" style="left:298.7px;top:688.0px;height:16px;line-height:16px;font-size:11.6px;letter-spacing:-0.218px;">Java Enterprise</span><svg style="left:399px;top:689px" width="13" height="13" viewBox="0 0 13 13"><path d="M12.500 0.500Q13 12 5.500 12.500 0 12.500 0.500 7.500 1 3 7 2.500 11 2 12.500 0.500z" fill="#5db848"/><path d="M1.500 11.500Q5 8 9.500 5.500" stroke="#3c3f41" stroke-width="0.900" fill="none"/></svg><span class="tx" style="left:416px;top:688.0px;height:16px;line-height:16px;font-size:11.6px;letter-spacing:0.047px;">Spring</span><svg style="left:1261px;top:688px" width="17" height="15" viewBox="0 0 17 15"><path d="M8 0.800a6.600 6 0 1 0 2 11.800l3.200 1.600-0.800-3.200A6.600 6 0 0 0 8 0.800z" fill="none" stroke="#868a8d" stroke-width="1.100"/></svg><span class="tx" style="left:1282.4px;top:688.0px;height:16px;line-height:16px;font-size:11.6px;letter-spacing:-0.113px;">Event Log</span><div id="status" class="abs"></div>
<svg style="left:9px;top:710px" width="15" height="15" viewBox="0 0 15 15"><rect x="0.500" y="0.500" width="13" height="11" fill="#5a5d5f" stroke="#a0a2a4"/><path d="M0 14h14.500" stroke="#a0a2a4"/></svg><span class="tx" style="left:1192px;top:710.2px;height:16px;line-height:16px;font-size:12.5px;letter-spacing:-0.256px;color:#a4a8ac;">147:1</span><span class="tx" style="left:1245px;top:710.2px;height:16px;line-height:16px;font-size:12.5px;letter-spacing:-1.797px;color:#a4a8ac;">LF</span><span class="tx" style="left:1269.7px;top:710.2px;height:16px;line-height:16px;font-size:12.5px;letter-spacing:-0.444px;color:#a4a8ac;">UTF-8</span><svg style="left:1304px;top:713px" width="5" height="9" viewBox="0 0 5 9"><path d="M0 3.500L2.500 0.500 5 3.500zM0 5.500L2.500 8.500 5 5.500z" fill="#a4a8ac"/></svg><svg style="left:1325px;top:714px" width="7" height="9" viewBox="0 0 8 10"><rect x="0" y="4" width="8" height="6" rx="0.800" fill="#a4a8ac"/><path d="M1.800 4V2.800a2.200 2.200 0 0 1 4.400 0V4" stroke="#a4a8ac" stroke-width="1.200" fill="none"/><rect x="3.300" y="6" width="1.400" height="2" fill="#3c3f41"/></svg><svg style="left:1345px;top:710px" width="14" height="15" viewBox="0 0 14 15"><path d="M3 4.500q0-4 4-4t4 4M0.500 5h13M3 5.500v5q0 3 4 3.500 4-.5 4-3.500v-5M3 8h-2v2.500h2M11 8h2v2.500h-2M5 11h4" stroke="#8a8e91" stroke-width="1" fill="none"/><rect x="4.200" y="7" width="2" height="1.600" fill="#8a8e91"/><rect x="7.800" y="7" width="2" height="1.600" fill="#8a8e91"/></svg><div id="task" class="abs"></div><div class="abs" style="left:251px;top:728px;width:10px;height:8px;background:#27591f"></div><div class="abs" style="left:261px;top:728px;width:30px;height:8px;background:#1d1d1d"></div><div class="abs" style="left:296px;top:728px;width:48px;height:8px;background:#323232"></div><div class="abs" style="left:1361px;top:728px;width:1px;height:8px;background:#8a8a8a"></div><div class="abs" style="left:1262px;top:733.5px;width:34px;height:3px;overflow:hidden"><span style="position:absolute;left:0;top:0;font-size:12px;line-height:12px;color:#fff;white-space:pre">17:18</span></div>
<svg style="left:1212px;top:700px" width="34" height="34" viewBox="0 0 34 34"><g transform="rotate(-11 17 17)"><rect x="4" y="4.500" width="26" height="25" rx="3.500" fill="#ef4f1b"/><g transform="translate(17 26) scale(1.25 0.92)"><text x="0" y="0" text-anchor="middle" font-family="Liberation Sans,sans-serif" font-weight="bold" font-style="italic" font-size="24" fill="#fff">S</text></g></g></svg>
</body></html>
